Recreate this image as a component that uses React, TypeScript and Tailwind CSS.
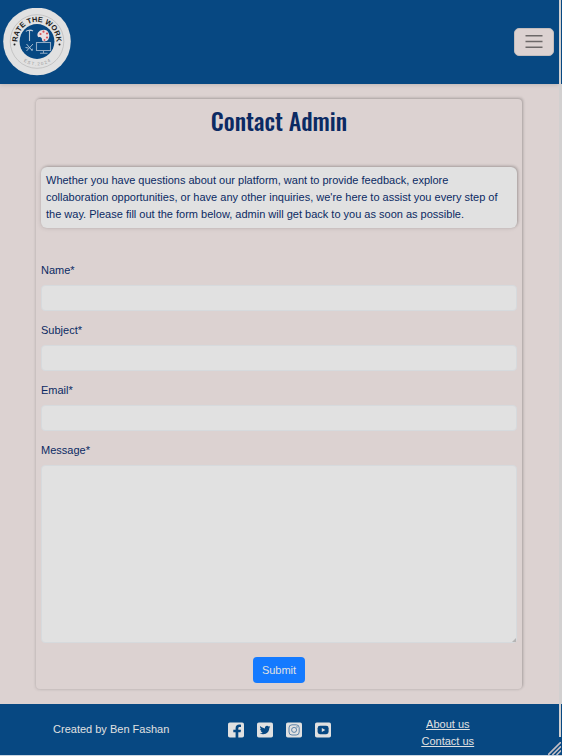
import type { ReactNode } from "react";

function Logo() {
  return (
    <svg viewBox="0 0 68 68" className="size-[68px]" role="img" aria-label="Rate the Work">
      <defs>
        <path id="top-arc" d="M14.5 33.500a19.500 19.500 0 0 1 39 0" />
        <path id="bottom-arc" d="M10 33.500a24 24 0 0 0 48 0" />
      </defs>
      <circle cx="34" cy="33.500" r="33.800" fill="#e1e1e1" />
      <circle cx="34" cy="33.500" r="26.800" fill="none" stroke="#b0b0b0" strokeWidth=".6" />
      <circle cx="34" cy="33.500" r="17.400" fill="#074882" />
      <text fontFamily="Liberation Sans, sans-serif" fontSize="7.400" fontWeight="700" fill="#1c1c1c" textAnchor="middle">
        <textPath href="#top-arc" startOffset="50%">RATE THE WORK</textPath>
      </text>
      <text fontFamily="Liberation Sans, sans-serif" fontSize="4.500" fill="#9a9a9a" textAnchor="middle">
        <textPath href="#bottom-arc" startOffset="50%">E S T . 2 0 2 4</textPath>
      </text>
      <circle cx="11.500" cy="36.500" r="1" fill="#222" />
      <circle cx="56.500" cy="36.500" r="1" fill="#222" />
      <g fill="none" stroke="#b9c8d8" strokeWidth="1.100">
        <path d="M23 23.500c1-1.500 5-1.800 7-.5M26.500 22.500v10.500" />
        <path d="M23.500 36l6 7M30 36l-6.500 7M22.500 39.500l3 .5M28 42l2-1" strokeWidth=".9" />
        <path d="M33.500 34.500h14v8h-14zM40.500 42.500v2.500M37 45.300h7.500" stroke="#8fa9c4" />
      </g>
      <path d="M41 21.800c-4.500 0-7 3-6.500 6 .7 2.500 3 .7 4 2.200s-.3 3.600 3 3.600c3 0 5-3 4.800-6s-2-5.800-5.300-5.800z" fill="#eadfe1" />
      <g fill="#d8525b">
        <circle cx="37.500" cy="26" r="1.100" />
        <circle cx="40.500" cy="23.700" r="1.100" />
        <circle cx="44" cy="25.500" r="1.100" />
        <circle cx="44" cy="29.500" r="1.100" />
        <circle cx="41.500" cy="32" r=".9" />
      </g>
    </svg>
  );
}

const field =
  "block w-full rounded border border-[#d6dadd] bg-[#e1e1e1] px-2 text-[#0b2a63] outline-none";

function Field({ id, label, children }: { id: string; label: string; children: ReactNode }) {
  return (
    <div className="mb-[11px]">
      <label htmlFor={id} className="mb-1.5 block">{label}</label>
      {children}
    </div>
  );
}

const blue = "#074882";

const socials = [
  {
    name: "Facebook",
    glyph: <path d="M7.600 16V10.300H5.300V7.700h2.300V6.300c0-2.500 1.400-3.700 3.500-3.700.8 0 1.500.1 1.900.1v2.300h-1.300c-1.100 0-1.400.6-1.400 1.400v1.300h2.700l-.4 2.600h-2.300V16z" fill={blue} />,
  },
  {
    name: "Twitter",
    glyph: <path d="M13.300 4.700c-.4.200-.8.300-1.200.4.400-.3.800-.7.900-1.200-.4.200-.9.400-1.400.5a2.200 2.200 0 0 0-3.700 2C6.100 6.300 4.500 5.400 3.400 4.100c-.6 1-.3 2.200.7 2.900-.4 0-.7-.1-1-.3 0 1.100.7 2 1.700 2.200-.3.100-.6.100-1 0 .3.900 1.100 1.500 2.100 1.500-.9.700-2 1-3.200.9 1 .6 2.100 1 3.400 1 4.100 0 6.400-3.500 6.200-6.500.4-.3.800-.700 1-1.100z" fill={blue} />,
  },
  {
    name: "Instagram",
    glyph: (
      <g fill="none" stroke="#3c6c9a" strokeWidth=".8">
        <rect x="3" y="2.800" width="10.200" height="10.200" rx="3" />
        <circle cx="8.100" cy="7.900" r="2.500" />
        <circle cx="11" cy="5" r=".3" />
      </g>
    ),
  },
  {
    name: "YouTube",
    glyph: (
      <>
        <rect x="2.600" y="3.800" width="11" height="8.400" rx="2.400" fill={blue} />
        <path d="M6.800 6.100l3.500 1.900-3.500 1.900z" fill="#e1e1e1" />
      </>
    ),
  },
];

export default function App() {
  return (
    <div className="flex min-h-screen bg-[#dcd2d1] font-['Liberation_Sans',Arial,sans-serif] text-[11px] leading-[17px] text-[#0b2a63]">
      <div className="flex min-w-0 flex-1 flex-col">
        <header className="flex h-[84px] items-center justify-between bg-[#074882] pr-[5px] pl-[3px] shadow-[0_1px_4px_#00000022]">
          <a href="#home"><Logo /></a>
          <button type="button" aria-label="Menu" className="flex h-7 w-10 items-center justify-center rounded-[5px] border border-[#c3bdbd] bg-[#dcd2d1]">
            <svg viewBox="0 0 18 16" className="h-4 w-[18px]" fill="none" stroke="#6c6868" strokeWidth="1.400" aria-hidden="true">
              <path d="M.5 1.700h17M.5 7.500h17M.5 13.300h17" />
            </svg>
          </button>
        </header>
        <main className="mt-[15px] mr-[37px] mb-[15px] ml-9 flex-1 rounded px-[5px] pb-1.5 shadow-[1px_-1px_3px_#0000003d,-1px_1px_3px_#00000014]">
          <h1 className="pt-[3px] text-center font-['Oswald','Liberation_Sans_Narrow',sans-serif] text-2xl leading-9 font-medium">Contact Admin</h1>
          <p className="mt-[29px] rounded-md bg-[#e1e1e1] px-[5px] py-[5px] shadow-[1px_-1px_3px_#0000003d,-1px_1px_4px_#00000014]">
            Whether you have questions about our platform, want to provide feedback, explore collaboration opportunities, or have any other inquiries, we're here to assist you every step of the way. Please fill out the form below, admin will get back to you as soon as possible.
          </p>
          <form className="mt-[34px]" onSubmit={(e) => e.preventDefault()}>
            <Field id="name" label="Name*"><input id="name" className={`${field} h-[26px]`} /></Field>
            <Field id="subject" label="Subject*"><input id="subject" className={`${field} h-[26px]`} /></Field>
            <Field id="email" label="Email*"><input id="email" type="email" className={`${field} h-[26px]`} /></Field>
            <Field id="message" label="Message*">
              <div className="relative">
                <textarea id="message" className={`${field} h-[178px] resize-none`} />
                <svg viewBox="0 0 4 4" className="absolute right-px bottom-px size-1" aria-hidden="true">
                  <path d="M4 0v4H0z" fill="#b5b5b5" />
                </svg>
              </div>
            </Field>
            <button type="submit" className="mx-auto mt-[14px] block h-[26px] rounded bg-[#147aff] px-[9px] text-[#e1e1e1]">Submit</button>
          </form>
        </main>
        <footer className="grid h-[51px] grid-cols-3 items-center bg-[#074882] px-[27px] text-[#e1e1e1]">
          <p className="text-center">Created by Ben Fashan</p>
          <div className="flex justify-center gap-[13px]">
            {socials.map(({ name, glyph }) => (
              <a key={name} href="#social" aria-label={name}>
                <svg viewBox="0 0 16 16" className="size-4">
                  <rect y=".5" width="16" height="15" rx="1.800" fill="#e1e1e1" />
                  {glyph}
                </svg>
              </a>
            ))}
          </div>
          <nav className="flex flex-col items-center pt-1.5 underline">
            <a href="#about">About us</a>
            <a href="#contact">Contact us</a>
          </nav>
        </footer>
        <div className="h-px bg-[#c9d6e2]" />
      </div>
      <div className="relative flex w-[3px] flex-col justify-between bg-[#d2d0d0]">
        <div className="flex h-[84px] justify-end"><div className="w-px bg-[#074882]" /></div>
        <div className="flex h-[52px] flex-col items-end bg-[#d2d0d0]">
          <div className="h-[33px] w-px bg-[#074882]" />
          <div className="h-[18px] w-full bg-[#074882]" />
        </div>
        <svg viewBox="0 0 13 13" className="absolute right-px bottom-px size-[13px]" stroke="#c4bec4" strokeWidth="1.600" aria-hidden="true">
          <path d="M0 13L13 0M4.300 13L13 4.300M8.600 13L13 8.600" />
        </svg>
      </div>
    </div>
  );
}
